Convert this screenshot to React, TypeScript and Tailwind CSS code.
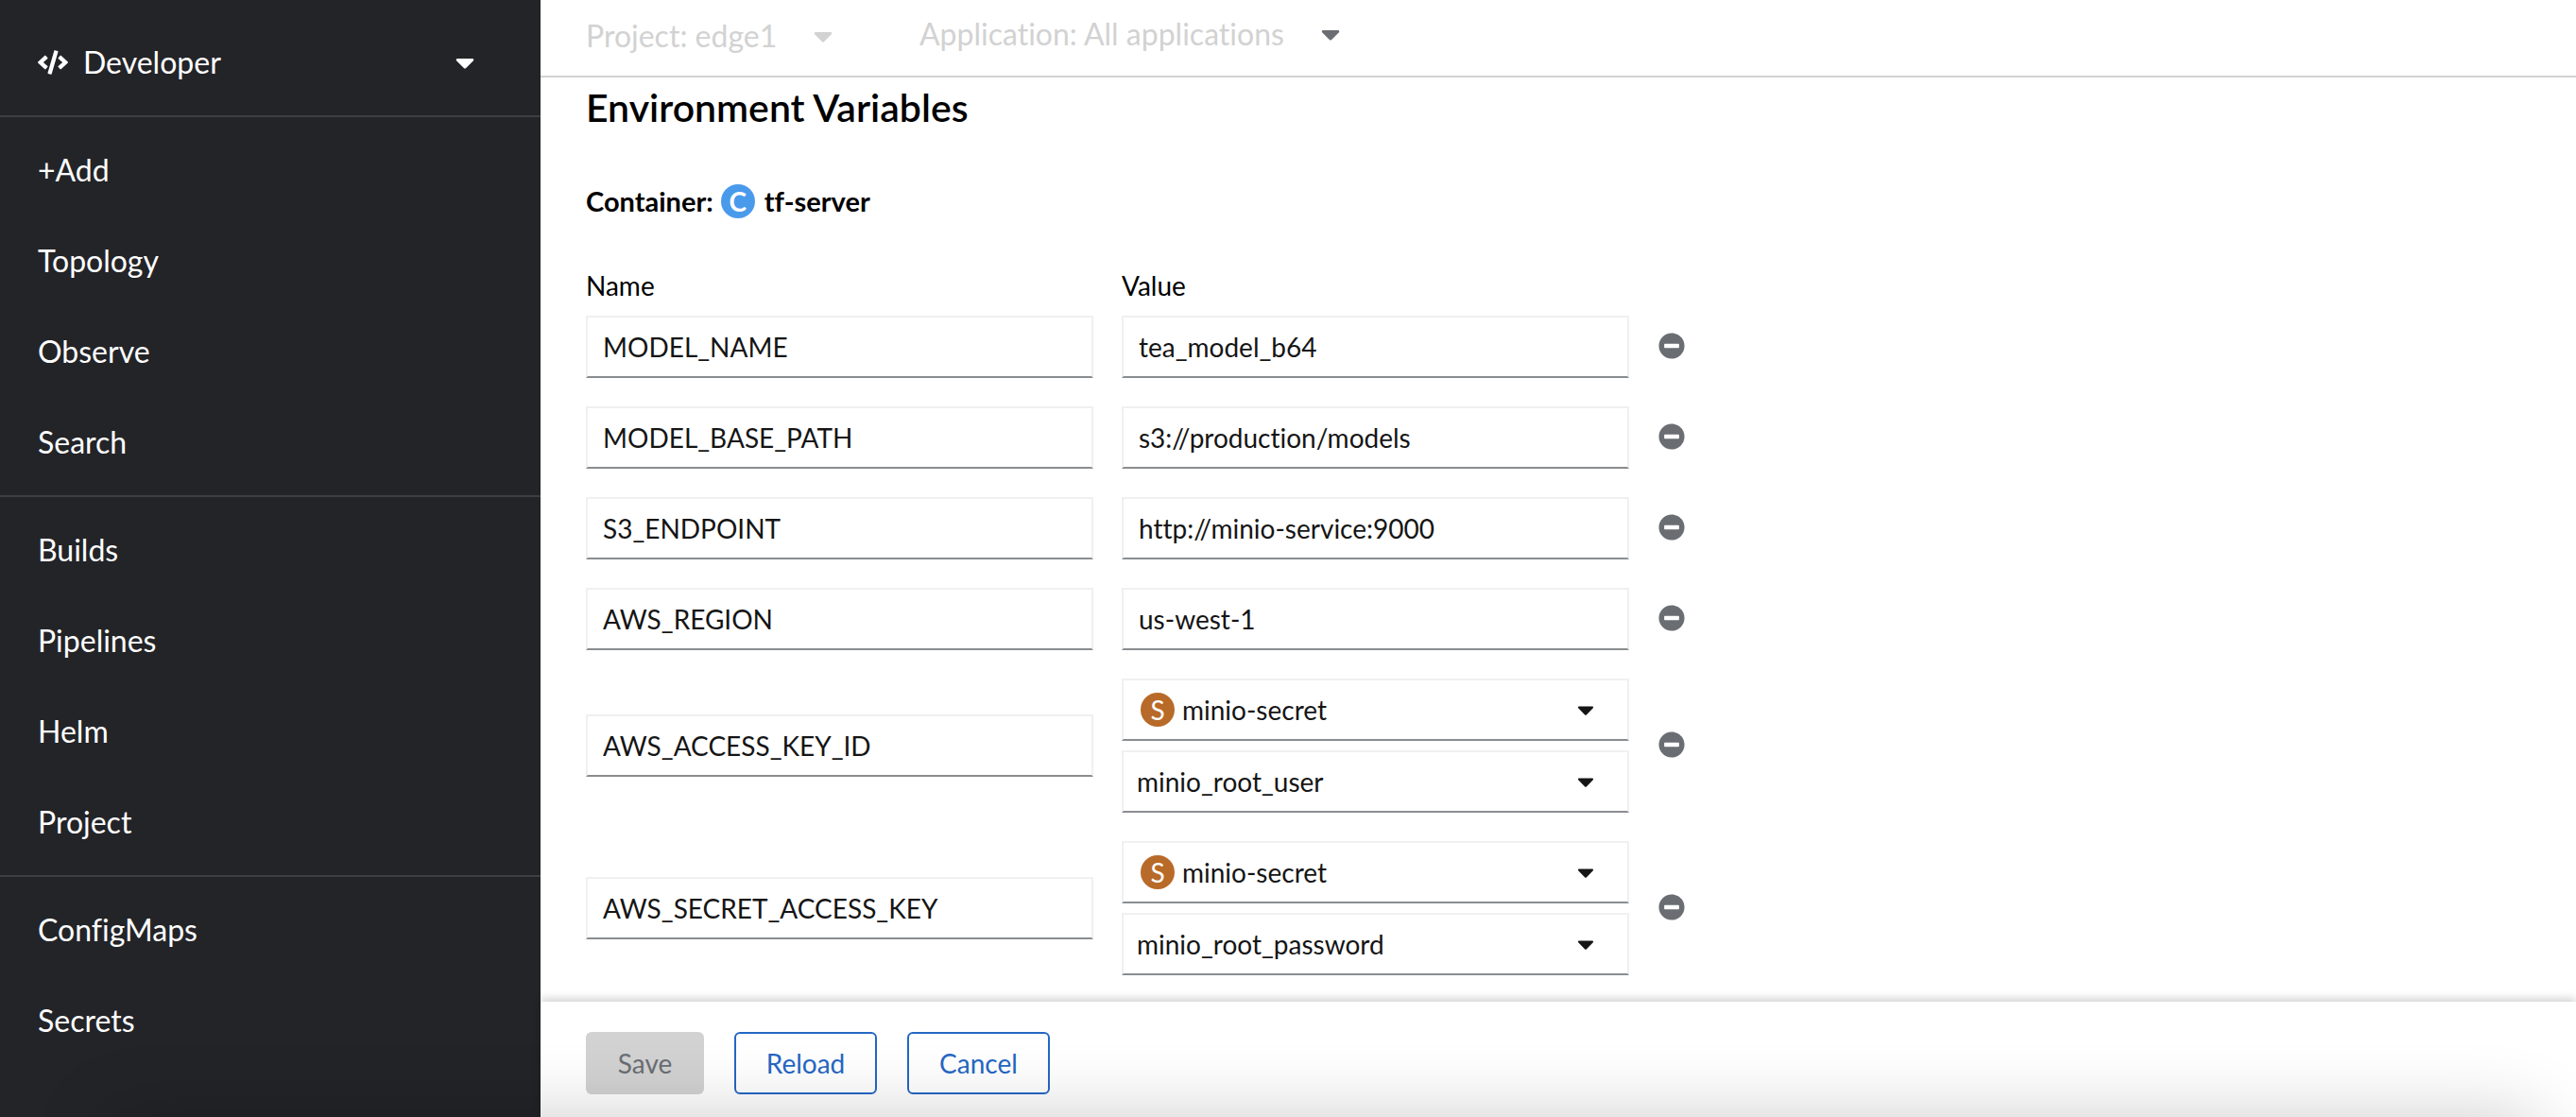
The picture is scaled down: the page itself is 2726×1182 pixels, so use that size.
import type { ReactNode } from "react";
import { FaCaretDown, FaCode, FaMinusCircle } from "react-icons/fa";

const navGroups = [
  ["+Add", "Topology", "Observe", "Search"],
  ["Builds", "Pipelines", "Helm", "Project"],
  ["ConfigMaps", "Secrets"],
];

type EnvVar = { name: string; value?: string; secret?: string; secretKey?: string };

const envVars: EnvVar[] = [
  { name: "MODEL_NAME", value: "tea_model_b64" },
  { name: "MODEL_BASE_PATH", value: "s3://production/models" },
  { name: "S3_ENDPOINT", value: "http://minio-service:9000" },
  { name: "AWS_REGION", value: "us-west-1" },
  { name: "AWS_ACCESS_KEY_ID", secret: "minio-secret", secretKey: "minio_root_user" },
  { name: "AWS_SECRET_ACCESS_KEY", secret: "minio-secret", secretKey: "minio_root_password" },
];

const fieldBox =
  "block h-[66px] w-full rounded-none border-2 border-[#f0f0f0] border-b-[#8a8d90] bg-white text-[28px] text-[#151515] outline-none";

function Sidebar() {
  return (
    <aside className="flex w-[572px] shrink-0 flex-col bg-[#232428] text-[32px] leading-[48px] text-white">
      <div className="relative flex h-[122px] shrink-0 items-center pt-2.5">
        <FaCode className="pointer-events-none absolute left-10 text-[32px]" />
        <select
          aria-label="Perspective"
          className="w-full appearance-none bg-transparent py-4 pr-24 pl-[88px] text-white outline-none"
        >
          <option>Developer</option>
        </select>
        <FaCaretDown className="pointer-events-none absolute right-16 text-[32px]" />
      </div>
      <nav aria-label="Main">
        {navGroups.map((group) => (
          <ul key={group[0]} className="border-t-2 border-[#3d3f43] py-2">
            {group.map((item) => (
              <li key={item}>
                <a href="#" className="block px-10 py-6">
                  {item}
                </a>
              </li>
            ))}
          </ul>
        ))}
      </nav>
    </aside>
  );
}

function Toolbar() {
  return (
    <header className="flex h-[82px] shrink-0 items-start gap-[86px] border-b-2 border-[#d2d2d2] px-12 text-[32px] leading-[44px] text-[#d2d2d2]">
      <div className="relative flex items-center pt-4">
        <select
          aria-label="Project"
          disabled
          className="appearance-none bg-transparent pr-16 outline-none disabled:opacity-100"
        >
          <option>Project: edge1</option>
        </select>
        <FaCaretDown className="pointer-events-none absolute right-0" />
      </div>
      <div className="relative flex items-center pt-3.5">
        <select
          aria-label="Application"
          className="appearance-none bg-transparent pr-16 outline-none"
        >
          <option>Application: All applications</option>
        </select>
        <FaCaretDown className="pointer-events-none absolute right-0 text-[#6a6e73]" />
      </div>
    </header>
  );
}

function Badge({ className, children }: { className: string; children: ReactNode }) {
  return (
    <span
      className={`flex size-9 items-center justify-center rounded-full text-[28px] leading-9 text-white ${className}`}
    >
      {children}
    </span>
  );
}

function SelectField({ label, value, badge }: { label: string; value: string; badge?: string }) {
  return (
    <div className="relative flex items-center">
      <select
        aria-label={label}
        className={`${fieldBox} appearance-none pr-20 ${badge ? "pl-[62px]" : "pl-3.5"}`}
      >
        <option>{value}</option>
      </select>
      {badge && (
        <Badge className="pointer-events-none absolute left-5 bg-[#b86a28]">{badge}</Badge>
      )}
      <FaCaretDown className="pointer-events-none absolute right-8 text-[28px] text-[#151515]" />
    </div>
  );
}

function EnvRow({ row }: { row: EnvVar }) {
  return (
    <>
      <input
        type="text"
        aria-label={`Name of ${row.name}`}
        defaultValue={row.name}
        className={`${fieldBox} px-4`}
      />
      {row.secret && row.secretKey ? (
        <div className="flex flex-col gap-2.5">
          <SelectField label={`Secret for ${row.name}`} value={row.secret} badge="S" />
          <SelectField label={`Secret key for ${row.name}`} value={row.secretKey} />
        </div>
      ) : (
        <input
          type="text"
          aria-label={`Value of ${row.name}`}
          defaultValue={row.value}
          className={`${fieldBox} px-4`}
        />
      )}
      <button
        type="button"
        aria-label={`Remove ${row.name}`}
        className="justify-self-start pb-0.5 pl-px text-[28px] text-[#6a6e73]"
      >
        <FaMinusCircle />
      </button>
    </>
  );
}

export default function App() {
  return (
    <div className="relative flex h-screen overflow-hidden bg-white font-['Lato',sans-serif] text-black [font-variant-ligatures:none]">
      <Sidebar />
      <main className="flex min-w-0 flex-1 flex-col">
        <Toolbar />
        <section className="min-h-0 flex-1 overflow-hidden px-12 pt-2">
          <h2 className="text-[41px] leading-[48px] font-semibold">Environment Variables</h2>
          <h3 className="mt-[57px] flex items-center text-[29px] leading-9 font-bold">
            Container:
            <Badge className="mr-2.5 ml-2 bg-[#4a9aec]">C</Badge>
            tf-server
          </h3>
          <div className="mt-[51px] grid grid-cols-[minmax(0,537px)_minmax(0,537px)_auto] gap-x-[30px] text-[28px] leading-10">
            <span>Name</span>
            <span>Value</span>
          </div>
          <form
            id="environment"
            className="mt-3 grid grid-cols-[minmax(0,537px)_minmax(0,537px)_auto] items-center gap-[30px]"
          >
            {envVars.map((row) => (
              <EnvRow key={row.name} row={row} />
            ))}
          </form>
        </section>
        <footer className="flex h-[122px] shrink-0 items-start gap-8 bg-white px-12 pt-8 text-[28px] shadow-[0_-4px_8px_rgba(0,0,0,0.16)]">
          <button
            type="submit"
            form="environment"
            disabled
            className="h-[66px] min-w-[125px] rounded-md bg-[#d2d2d2] px-7 text-[#6a6e73]"
          >
            Save
          </button>
          <button
            type="button"
            className="h-[66px] min-w-[151px] rounded-md border-2 border-[#2567c4] px-7 text-[#2567c4]"
          >
            Reload
          </button>
          <button
            type="button"
            className="h-[66px] min-w-[151px] rounded-md border-2 border-[#2567c4] px-7 text-[#2567c4]"
          >
            Cancel
          </button>
        </footer>
      </main>
      {/* Soft shade rising from below the bottom edge of the window */}
      <div className="pointer-events-none absolute top-full right-10 left-28 h-40 shadow-[0_0_80px_rgba(0,0,0,0.2)]" />
    </div>
  );
}
